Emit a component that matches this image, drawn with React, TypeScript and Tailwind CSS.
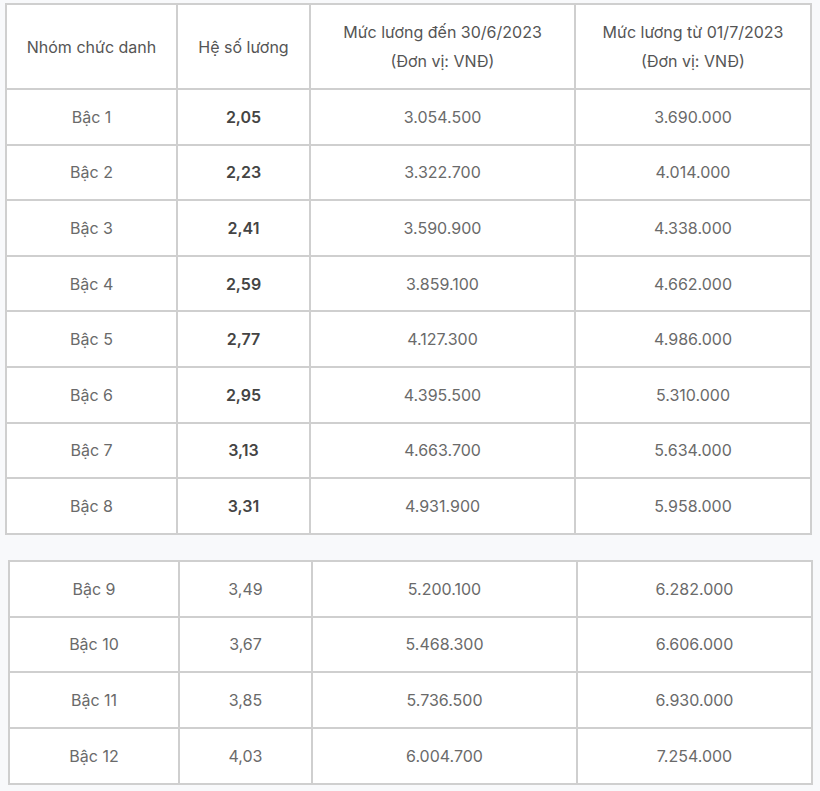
const top = [
  ['Bậc 1', '2,05', '3.054.500', '3.690.000'],
  ['Bậc 2', '2,23', '3.322.700', '4.014.000'],
  ['Bậc 3', '2,41', '3.590.900', '4.338.000'],
  ['Bậc 4', '2,59', '3.859.100', '4.662.000'],
  ['Bậc 5', '2,77', '4.127.300', '4.986.000'],
  ['Bậc 6', '2,95', '4.395.500', '5.310.000'],
  ['Bậc 7', '3,13', '4.663.700', '5.634.000'],
  ['Bậc 8', '3,31', '4.931.900', '5.958.000'],
];

const bottom = [
  ['Bậc 9', '3,49', '5.200.100', '6.282.000'],
  ['Bậc 10', '3,67', '5.468.300', '6.606.000'],
  ['Bậc 11', '3,85', '5.736.500', '6.930.000'],
  ['Bậc 12', '4,03', '6.004.700', '7.254.000'],
];

const cell = 'border-2 border-[#cfcfcf] text-center align-middle p-0';

export default function App() {
  return (
    <div
      className="h-[791px] w-[820px] overflow-hidden bg-[#f8f9fb] text-[16px] text-[#6a6a6a]"
      style={{ fontFamily: 'Inter, "Liberation Sans", Arial, sans-serif' }}
    >
      {/* Top table */}
      <div className="pl-[5px] pt-[3px]">
        <table className="table-fixed border-collapse bg-white">
          <colgroup>
            <col className="w-[171px]" />
            <col className="w-[133px]" />
            <col className="w-[265px]" />
            <col className="w-[236px]" />
          </colgroup>
          <thead>
            <tr className="h-[85px] text-[#555]">
              <th className={`${cell} font-normal`}>Nhóm chức danh</th>
              <th className={`${cell} font-normal`}>Hệ số lương</th>
              <th className={`${cell} font-normal leading-[29px]`}>
                Mức lương đến 30/6/2023
                <br />
                (Đơn vị: VNĐ)
              </th>
              <th className={`${cell} font-normal leading-[29px]`}>
                Mức lương từ 01/7/2023
                <br />
                (Đơn vị: VNĐ)
              </th>
            </tr>
          </thead>
          <tbody>
            {top.map((r) => (
              <tr key={r[0]} className="h-[55.6px]">
                <td className={cell}>{r[0]}</td>
                <td className={`${cell} font-semibold text-[#444]`}>{r[1]}</td>
                <td className={cell}>{r[2]}</td>
                <td className={cell}>{r[3]}</td>
              </tr>
            ))}
          </tbody>
        </table>
      </div>

      {/* Bottom table */}
      <div className="pl-[8px] pt-[25px]">
        <table className="table-fixed border-collapse bg-white">
          <colgroup>
            <col className="w-[170px]" />
            <col className="w-[133px]" />
            <col className="w-[265px]" />
            <col className="w-[235px]" />
          </colgroup>
          <tbody>
            {bottom.map((r) => (
              <tr key={r[0]} className="h-[55.8px]">
                <td className={cell}>{r[0]}</td>
                <td className={cell}>{r[1]}</td>
                <td className={cell}>{r[2]}</td>
                <td className={cell}>{r[3]}</td>
              </tr>
            ))}
          </tbody>
        </table>
      </div>
    </div>
  );
}
